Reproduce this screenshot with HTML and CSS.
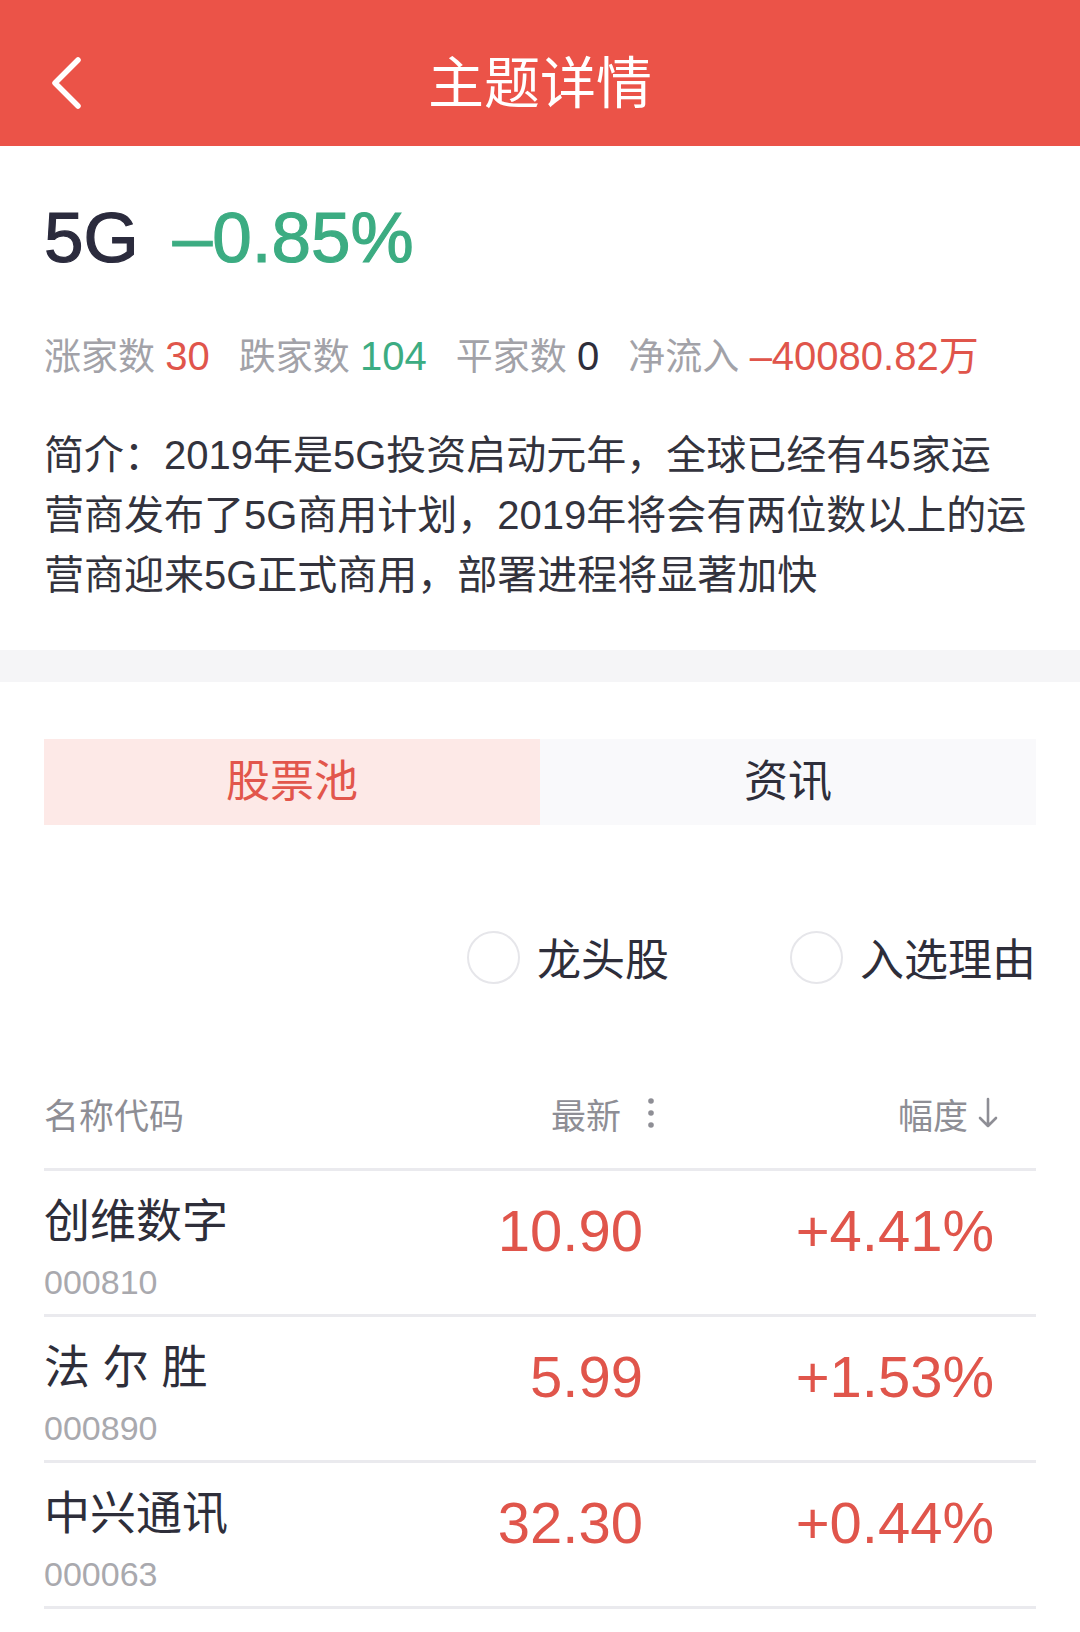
FILE: index.html
```html
<!DOCTYPE html>
<html lang="zh-CN">
<head>
    <meta charset="UTF-8">
    <meta name="viewport" content="width=device-width, initial-scale=1.0">
    <title>主题详情</title>
    <link rel="stylesheet" href="styles.css">
</head>
<body>
    <!-- Top bar -->
    <header class="topbar">
        <a class="back" href="#">
            <svg width="34" height="56" viewBox="0 0 34 56">
                <path d="M27 4 L4 27 L27 50" fill="none" stroke="#fff" stroke-width="5.5" stroke-linecap="round" stroke-linejoin="round"/>
            </svg>
        </a>
        <h1 class="topbar-title">主题详情</h1>
        <span></span>
    </header>

    <!-- Theme summary -->
    <section class="theme">
        <div class="theme-head">
            <span class="theme-name">5G</span>
            <span class="theme-change down">–0.85%</span>
        </div>
        <div class="theme-stats">
            <span class="stat">涨家数 <em class="up">30</em></span>
            <span class="stat">跌家数 <em class="down">104</em></span>
            <span class="stat">平家数 <em class="flat">0</em></span>
            <span class="stat">净流入 <em class="up">–40080.82万</em></span>
        </div>
        <p class="theme-intro">简介：2019年是5G投资启动元年，全球已经有45家运<br>营商发布了5G商用计划，2019年将会有两位数以上的运<br>营商迎来5G正式商用，部署进程将显著加快</p>
    </section>

    <div class="spacer"></div>

    <!-- Stock pool -->
    <section class="pool">
        <div class="tabs">
            <a class="tab active" href="#">股票池</a>
            <a class="tab" href="#">资讯</a>
        </div>

        <div class="filters">
            <label class="check"><span class="circle"></span>龙头股</label>
            <label class="check"><span class="circle"></span>入选理由</label>
        </div>

        <div class="table-head">
            <span>名称代码</span>
            <span class="col-price">最新
                <svg class="dots" width="8" height="34" viewBox="0 0 8 34">
                    <circle cx="4" cy="5" r="2.8" fill="#8e8e95"/>
                    <circle cx="4" cy="17" r="2.8" fill="#8e8e95"/>
                    <circle cx="4" cy="29" r="2.8" fill="#8e8e95"/>
                </svg>
            </span>
            <span class="col-change">幅度
                <svg class="arrow" width="20" height="32" viewBox="0 0 20 32">
                    <path d="M10 2 V29 M2 21 L10 29 L18 21" fill="none" stroke="#8e8e95" stroke-width="2.6" stroke-linecap="round" stroke-linejoin="round"/>
                </svg>
            </span>
        </div>

        <ul class="stock-list">
            <li class="stock">
                <div class="stock-info">
                    <div class="stock-name">创维数字</div>
                    <div class="stock-code">000810</div>
                </div>
                <div class="stock-price up">10.90</div>
                <div class="stock-change up">+4.41%</div>
            </li>
            <li class="stock">
                <div class="stock-info">
                    <div class="stock-name">法 尔 胜</div>
                    <div class="stock-code">000890</div>
                </div>
                <div class="stock-price up">5.99</div>
                <div class="stock-change up">+1.53%</div>
            </li>
            <li class="stock">
                <div class="stock-info">
                    <div class="stock-name">中兴通讯</div>
                    <div class="stock-code">000063</div>
                </div>
                <div class="stock-price up">32.30</div>
                <div class="stock-change up">+0.44%</div>
            </li>
            <li class="stock">
                <div class="stock-info">
                    <div class="stock-name">烽火通信</div>
                    <div class="stock-code">600498</div>
                </div>
                <div class="stock-price up">21.36</div>
                <div class="stock-change up">+0.28%</div>
            </li>
        </ul>
    </section>
</body>
</html>
```

FILE: styles.css
```css
/* Theme detail page */
body {
    margin: 0;
    padding: 0;
    background-color: #fff;
    font-family: "Liberation Sans", "Noto Sans CJK SC", sans-serif;
    color: #2e2e3a;
}

em {
    font-style: normal;
}

.up {
    color: #e0554b;
}

.down {
    color: #3cac82;
}

.flat {
    color: #2e2e3a;
}

/* Top bar */
.topbar {
    display: grid;
    grid-template-columns: 1fr auto 1fr;
    align-items: center;
    height: 124px;
    padding-top: 22px;
    background-color: #eb5348;
}

.back {
    display: flex;
    padding-left: 51px;
}

.topbar-title {
    margin: 0;
    font-size: 56px;
    font-weight: 400;
    line-height: 64px;
    color: #fff;
}

/* Summary */
.theme {
    padding: 0 44px 45px;
}

.theme-head {
    display: flex;
    gap: 34px;
    margin-top: 56px;
    font-size: 71px;
    line-height: 72px;
    -webkit-text-stroke: 1.2px currentColor;
}

.theme-name {
    color: #2b2b3d;
}

.theme-stats {
    display: flex;
    gap: 29px;
    margin-top: 57px;
    font-size: 37px;
    line-height: 50px;
    color: #a2a2a8;
}

.theme-stats em {
    font-size: 40px;
}

.theme-intro {
    margin: 42px 0 0;
    font-size: 40px;
    line-height: 60px;
    color: #33333d;
}

.spacer {
    height: 32px;
    background-color: #f5f5f7;
}

/* Stock pool */
.pool {
    padding: 0 44px;
}

.tabs {
    display: flex;
    margin-top: 57px;
    height: 86px;
}

.tab {
    flex: 1;
    display: flex;
    align-items: center;
    justify-content: center;
    font-size: 44px;
    line-height: 56px;
    color: #2e2e3a;
    text-decoration: none;
    background-color: #f9f9fb;
}

.tab.active {
    color: #e2564c;
    background-color: #fde9e7;
}

.filters {
    display: flex;
    justify-content: flex-end;
    gap: 121px;
    margin-top: 82px;
    height: 100px;
    align-items: center;
}

.check {
    display: flex;
    align-items: center;
    font-size: 44px;
    color: #2e2e3a;
}

.circle {
    width: 49px;
    height: 49px;
    margin-right: 17px;
    border: 2px solid #e6e6ea;
    border-radius: 50%;
}

.table-head {
    display: grid;
    grid-template-columns: 1fr 300px 351px;
    align-items: center;
    margin-top: 80px;
    padding: 0 38px 29px 0;
    height: 52px;
    font-size: 35px;
    color: #8e8e95;
    border-bottom: 3px solid #eaeaee;
}

.col-price,
.col-change {
    display: flex;
    align-items: center;
    justify-content: flex-end;
}

.dots {
    margin-left: 26px;
    margin-right: -8px;
}

.arrow {
    margin-left: 10px;
}

.stock-list {
    list-style-type: none;
    margin: 0;
    padding: 0;
}

.stock {
    display: grid;
    grid-template-columns: 1fr 300px 351px;
    padding: 20px 42px 9px 0;
    border-bottom: 3px solid #eaeaee;
}

.stock-name {
    font-size: 46px;
    line-height: 60px;
    color: #2e2e3a;
}

.stock-code {
    margin-top: 8px;
    font-size: 34px;
    line-height: 46px;
    color: #a9a9ae;
}

.stock-price,
.stock-change {
    margin-top: 5px;
    font-size: 58px;
    line-height: 70px;
    text-align: right;
}
```
